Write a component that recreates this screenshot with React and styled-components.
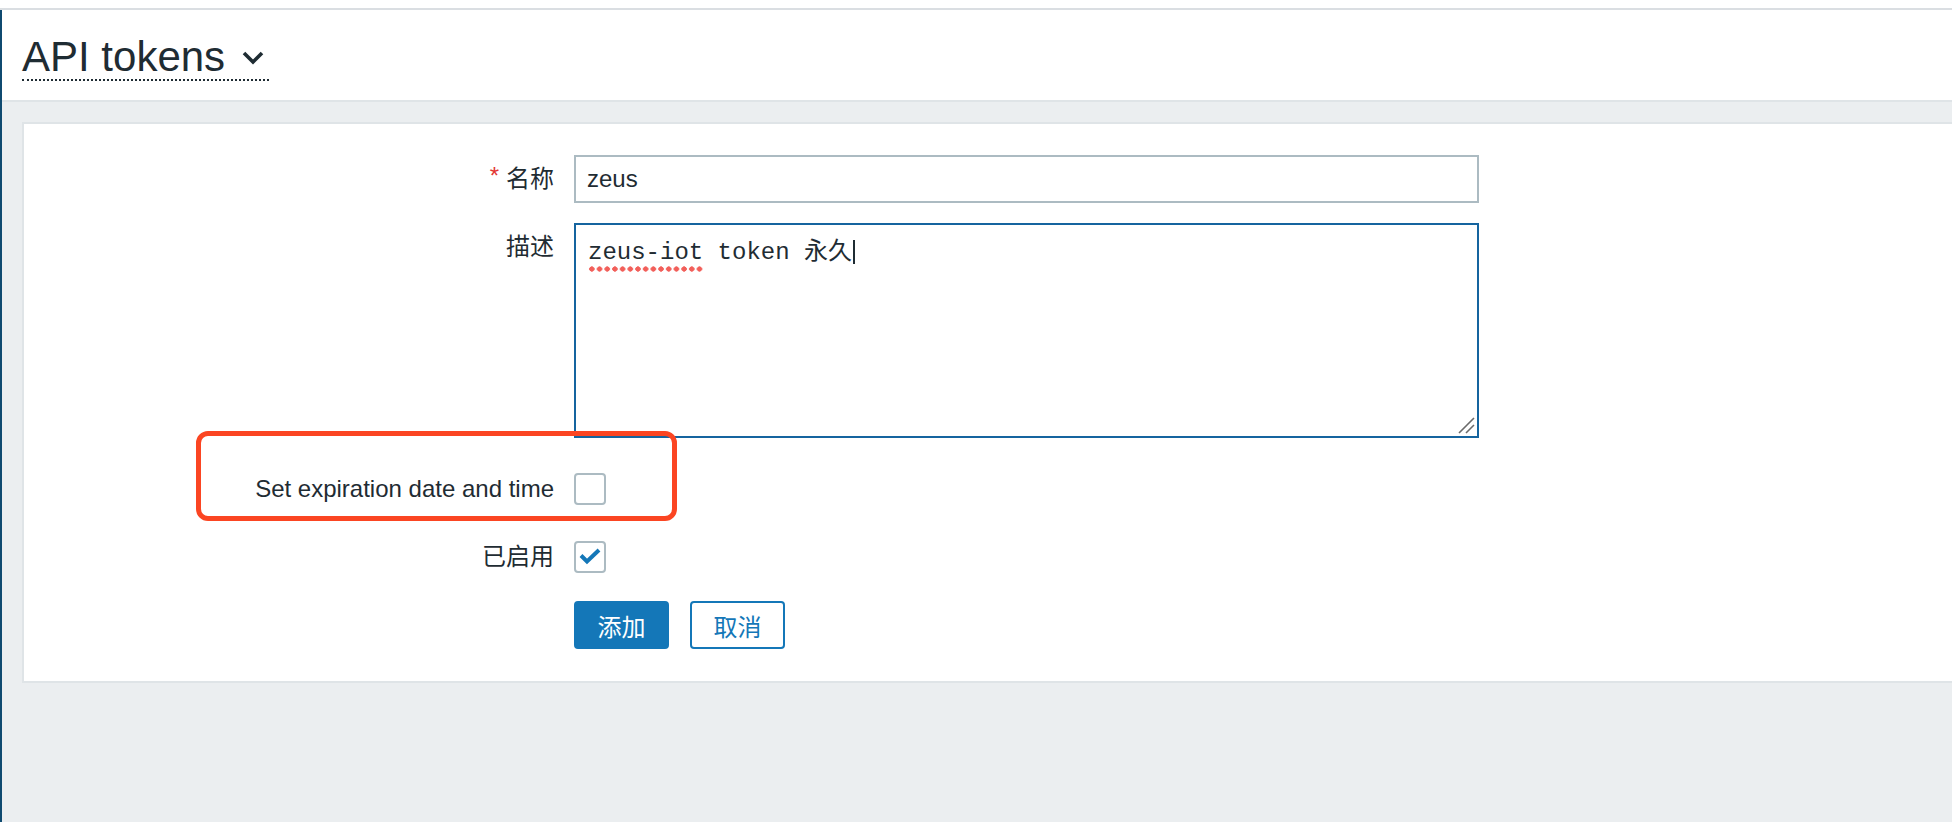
import React from "react";
import styled, { createGlobalStyle } from "styled-components";

const GlobalStyle = createGlobalStyle`
  html, body {
    margin: 0;
    padding: 0;
    background: #ffffff;
    overflow: hidden;
  }
  body {
    font-family: "Liberation Sans", Arial, "Noto Sans CJK SC", sans-serif;
    color: #1f2c33;
  }
`;

const App = () => {
  return (
    <>
      <GlobalStyle />
      <Page>
        <TopEdge />
        <Main>
          <Header>
            <Title>
              API tokens
              <Chevron width="24" height="15" viewBox="0 0 24 15">
                <path d="M3 3 L12 12 L21 3" fill="none" stroke="#1f2c33" strokeWidth="3.6" />
              </Chevron>
            </Title>
          </Header>

          <Card>
            <Form>
              <Row>
                <Label required>名称</Label>
                <Field>
                  <TextInput>zeus</TextInput>
                </Field>
              </Row>

              <Row>
                <Label>描述</Label>
                <Field>
                  <DescriptionBox>
                    <Misspelled>zeus-iot</Misspelled> token 永久
                    <Caret />
                    <ResizeGrip width="18" height="18" viewBox="0 0 18 18">
                      <path d="M16 1 L1 16 M16 8 L8 16" stroke="#6b6b6b" strokeWidth="1.6" />
                    </ResizeGrip>
                  </DescriptionBox>
                </Field>
              </Row>

              <Row>
                <Label>Set expiration date and time</Label>
                <Field>
                  <Checkbox />
                </Field>
                <Annotation />
              </Row>

              <Row>
                <Label>已启用</Label>
                <Field>
                  <Checkbox>
                    <svg width="32" height="32" viewBox="0 0 32 32">
                      <path d="M7 14.5 L13 20.5 L25 9" fill="none" stroke="#1477b8" strokeWidth="4" />
                    </svg>
                  </Checkbox>
                </Field>
              </Row>

              <Row>
                <Label />
                <Buttons>
                  <Button primary>添加</Button>
                  <Button>取消</Button>
                </Buttons>
              </Row>
            </Form>
          </Card>
        </Main>
      </Page>
    </>
  );
};

export default App;

const Page = styled.div`
  display: flex;
  flex-direction: column;
  height: 100vh;
  overflow: hidden;
`;

const TopEdge = styled.div`
  height: 8px;
  background: #ffffff;
  border-bottom: 2px solid #dadee2;
  flex-shrink: 0;
`;

const Main = styled.div`
  flex: 1;
  display: flex;
  flex-direction: column;
  background: #ebeef0;
  border-left: 2px solid #0f4a70;
`;

const Header = styled.div`
  height: 92px;
  box-sizing: border-box;
  padding: 25px 0 0 20px;
  background: #ffffff;
  border-bottom: 2px solid #dfe4e7;
`;

const Title = styled.h1`
  display: inline-block;
  margin: 0;
  padding-right: 4px;
  font-size: 42px;
  font-weight: normal;
  line-height: 44px;
  color: #1f2c33;
  border-bottom: 2px dotted #1f2c33;
`;

const Chevron = styled.svg`
  margin-left: 16px;
  vertical-align: 6px;
`;

const Card = styled.div`
  margin: 20px -20px 0 20px;
  padding: 31px 0 32px;
  background: #ffffff;
  border: 2px solid #dfe4e7;
  border-right: none;
`;

const Form = styled.div`
  display: flex;
  flex-direction: column;
  gap: 20px;
`;

const Row = styled.div`
  position: relative;
  display: grid;
  grid-template-columns: 530px 905px;
  column-gap: 20px;
  min-height: 48px;
`;

const Label = styled.label`
  text-align: right;
  font-size: 24px;
  line-height: 48px;
  color: #1f2c33;
  white-space: nowrap;

  &::before {
    content: ${(p) => (p.required ? '"*"' : "none")};
    color: #e33734;
    margin-right: 7px;
    font-size: 24px;
    position: relative;
    top: -3px;
  }
`;

const Field = styled.div`
  display: flex;
  align-items: center;
`;

const TextInput = styled.div`
  box-sizing: border-box;
  width: 100%;
  height: 48px;
  padding: 0 11px;
  border: 2px solid #acbbc2;
  background: #ffffff;
  font-size: 24px;
  line-height: 44px;
  color: #1f2c33;
`;

const DescriptionBox = styled.div`
  position: relative;
  box-sizing: border-box;
  width: 100%;
  height: 215px;
  margin-bottom: 7px;
  padding: 13px 12px;
  border: 2px solid #15649f;
  background: #ffffff;
  font-family: "Liberation Mono", "Courier New", "Noto Sans CJK SC", monospace;
  font-size: 24px;
  line-height: 30px;
  color: #1f2c33;
  white-space: pre;
`;

const Misspelled = styled.span`
  background-image: radial-gradient(circle, #f25f5a 2.4px, transparent 2.9px);
  background-size: 7.7px 6px;
  background-repeat: repeat-x;
  background-position: 0 100%;
  padding-bottom: 6px;
`;

const Caret = styled.span`
  display: inline-block;
  width: 2px;
  height: 24px;
  margin-left: 1px;
  background: #1f2c33;
  vertical-align: -5px;
`;

const ResizeGrip = styled.svg`
  position: absolute;
  right: 1px;
  bottom: 1px;
`;

const Checkbox = styled.div`
  box-sizing: border-box;
  width: 32px;
  height: 32px;
  border: 2px solid #acbbc2;
  border-radius: 4px;
  background: #ffffff;
  display: flex;
  align-items: center;
  justify-content: center;

  svg {
    margin: -2px;
  }
`;

const Annotation = styled.div`
  position: absolute;
  top: -34px;
  left: 172px;
  width: 481px;
  height: 90px;
  box-sizing: border-box;
  border: 5px solid #fb4522;
  border-radius: 12px;
  pointer-events: none;
`;

const Buttons = styled.div`
  display: flex;
  gap: 21px;
`;

const Button = styled.button`
  box-sizing: border-box;
  width: 95px;
  height: 48px;
  border-radius: 4px;
  border: 2px solid #1477b8;
  background: ${(p) => (p.primary ? "#1477b8" : "#ffffff")};
  color: ${(p) => (p.primary ? "#ffffff" : "#1477b8")};
  font-family: "Liberation Sans", Arial, "Noto Sans CJK SC", sans-serif;
  font-size: 24px;
  padding: 0;
  cursor: pointer;
`;
